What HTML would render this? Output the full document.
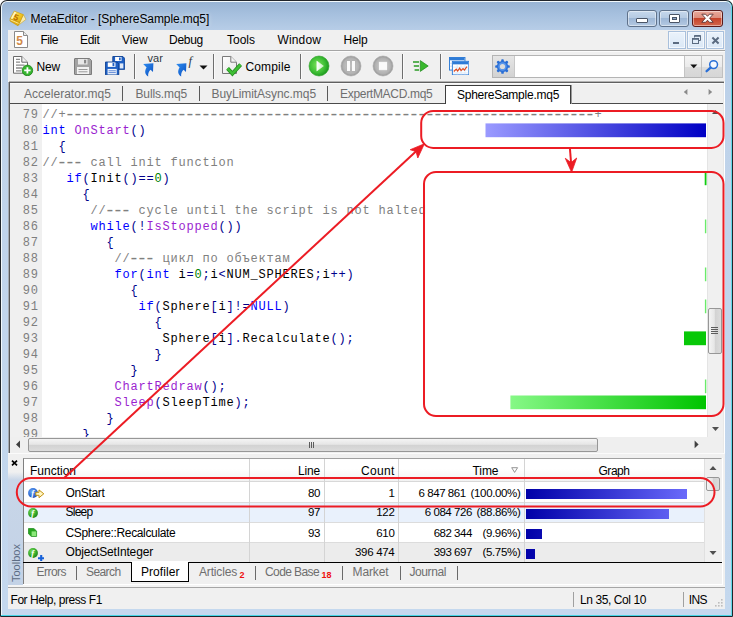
<!DOCTYPE html>
<html><head><meta charset="utf-8"><title>MetaEditor - [SphereSample.mq5]</title>
<style>
*{box-sizing:border-box;margin:0;padding:0}
html,body{width:733px;height:617px;overflow:hidden;background:#fff}
body{position:relative;font-family:"Liberation Sans",sans-serif;font-size:12px;color:#000}
#win{position:absolute;left:0;top:0;width:733px;height:617px;overflow:hidden}
#win div,#win svg,#win pre{position:absolute}
.t{white-space:nowrap}
#frame{left:0;top:0;width:733px;height:617px;border-radius:7px 7px 1px 1px;background:#20252b}
#frame2{left:1px;top:1px;width:731px;height:615px;border-radius:6px 6px 0 0;background:#f2f9fc;border-right:1px solid #62d9e8;border-bottom:1px solid #45d6e6}
#frame3{left:2px;top:2px;width:729px;height:613px;border-radius:5px 5px 0 0;background:linear-gradient(to bottom,#98b4d4 0px,#a6c0de 12px,#b7cde7 28px,#bfd3ea 120px,#c4d8ee 611px)}
#frame4{left:6px;top:30px;width:721px;height:581px;border-right:2px solid rgba(255,255,255,.0)}
pre.code{font-family:"Liberation Mono",monospace;font-size:12px;letter-spacing:.8px;line-height:16px;white-space:pre;color:#000}
.c{color:#808080}.k{color:#0000ff}.f{color:#9b1fd0}.n{color:#008000}.p{color:#00008b}
pre.ln{color:#7e7e7e}

.d{font-size:18px;letter-spacing:-2.8px;line-height:0;position:relative;top:1.5px;margin-left:-2px;margin-right:2px}

</style></head><body>
<div id="win">
<div id="frame"></div><div id="frame2"></div><div id="frame3"></div><div id="frame4"></div>
<svg style="left:8px;top:8px" width="20" height="20" viewBox="8 8 20 20">
<defs><linearGradient id="bk" x1="0" y1="0" x2="1" y2="1"><stop offset="0" stop-color="#fff6c0"/><stop offset=".45" stop-color="#f6cf2c"/><stop offset="1" stop-color="#e2a400"/></linearGradient></defs>
<path d="M23.3 14.6 L25.9 19.4 L17.8 25.7 L19.8 22.2 Z" fill="#f8ecb0" stroke="#c79a10" stroke-width=".5"/>
<path d="M10.1 18.5 L19.9 22.2 L17.8 25.7 L9.9 21 Z" fill="#e3ae10" stroke="#b98a08" stroke-width=".5"/>
<path d="M10.3 19.8 L18.6 23.4" stroke="#fff2b0" stroke-width=".8"/>
<path d="M14.2 11.1 L23.3 14.6 L19.9 22.3 L10.1 18.5 Z" fill="url(#bk)" stroke="#c8980c" stroke-width=".6"/>
<path d="M14.6 11.8 L16.2 12.4 L12.4 19 L10.9 18.4 Z" fill="#fffbe0" opacity=".8"/>
<text x="14" y="20.6" font-family="Liberation Sans, sans-serif" font-weight="bold" font-size="8.5" fill="#b86a00" transform="rotate(22 17 17)">5</text>
</svg>
<div class="t" style="left:30.5px;top:11.4px;font-size:12px;line-height:16px;letter-spacing:-0.09px;color:#000;text-shadow:0 0 4px rgba(255,255,255,.55),0 0 8px rgba(255,255,255,.35);">MetaEditor - [SphereSample.mq5]</div>
<div style="left:627px;top:10px;width:30px;height:17px;border:1px solid #5f728b;border-radius:3px;background:linear-gradient(to bottom,#c6d8ec 0,#b6cbe3 45%,#9db7d6 50%,#b4c9e2 100%);box-shadow:inset 0 0 0 1px rgba(255,255,255,.45)"></div>
<div style="left:659px;top:10px;width:30px;height:17px;border:1px solid #5f728b;border-radius:3px;background:linear-gradient(to bottom,#c6d8ec 0,#b6cbe3 45%,#9db7d6 50%,#b4c9e2 100%);box-shadow:inset 0 0 0 1px rgba(255,255,255,.45)"></div>
<div style="left:692px;top:10px;width:31px;height:17px;border:1px solid #5a1a1a;border-radius:3px;background:linear-gradient(to bottom,#e9a99b 0,#dd8f7f 45%,#c6432a 50%,#d2674d 100%);box-shadow:inset 0 0 0 1px rgba(255,255,255,.45)"></div>
<div style="left:636px;top:18.2px;width:11.5px;height:4.4px;background:#fff;border:1px solid #4a5566;border-radius:1px"></div>
<div style="left:669px;top:14px;width:11px;height:9px;background:#fff;border:1px solid #4a5566;border-radius:1px"></div><div style="left:672px;top:17px;width:5px;height:3px;background:#8fa8c8;border:1px solid #4a5566"></div>
<svg style="left:700px;top:12px" width="16" height="13" viewBox="0 0 16 13"><path d="M1.8 2.2 L5.6 2.2 L7.5 4.3 L9.4 2.2 L13.2 2.2 L9.6 6.2 L13.2 10.3 L9.4 10.3 L7.5 8.2 L5.6 10.3 L1.8 10.3 L5.4 6.2 Z" fill="#fff" stroke="#5c3434" stroke-width=".9" stroke-linejoin="round"/></svg>
<div style="left:8px;top:30px;width:717px;height:20px;background:#f0f0f0"></div>
<div style="left:8px;top:50px;width:717px;height:1px;background:#a5a5a5"></div>
<svg style="left:13px;top:31.4px" width="16" height="17" viewBox="0 0 16 17"><path d="M1.5 .5 H10.5 L14.5 4.5 V16.5 H1.5 Z" fill="#fff" stroke="#8a8a8a"/><path d="M10.5 .5 V4.5 H14.5" fill="#e8e8e8" stroke="#8a8a8a"/><text x="3.2" y="13.5" font-family="Liberation Sans, sans-serif" font-weight="bold" font-size="12" fill="#d08a4a">5</text></svg>
<div class="t" style="left:40.5px;top:31.8px;font-size:12px;line-height:16px;letter-spacing:-0.46px;color:#000;">File</div>
<div class="t" style="left:80.0px;top:31.8px;font-size:12px;line-height:16px;letter-spacing:-0.29px;color:#000;">Edit</div>
<div class="t" style="left:122.0px;top:31.8px;font-size:12px;line-height:16px;letter-spacing:-0.07px;color:#000;">View</div>
<div class="t" style="left:169.0px;top:31.8px;font-size:12px;line-height:16px;letter-spacing:-0.27px;color:#000;">Debug</div>
<div class="t" style="left:227.0px;top:31.8px;font-size:12px;line-height:16px;letter-spacing:-0.00px;color:#000;">Tools</div>
<div class="t" style="left:277.5px;top:31.8px;font-size:12px;line-height:16px;letter-spacing:0.14px;color:#000;">Window</div>
<div class="t" style="left:343.5px;top:31.8px;font-size:12px;line-height:16px;letter-spacing:-0.17px;color:#000;">Help</div>
<div style="left:668.4px;top:31.4px;width:17.2px;height:17.2px;border:1px solid #a9c0dc;background:linear-gradient(to bottom,#eaf2fb,#dbe8f6);box-shadow:inset 0 0 0 1px #f4f8fd"></div>
<div style="left:687.4px;top:31.4px;width:17.2px;height:17.2px;border:1px solid #a9c0dc;background:linear-gradient(to bottom,#eaf2fb,#dbe8f6);box-shadow:inset 0 0 0 1px #f4f8fd"></div>
<div style="left:706.4px;top:31.4px;width:17.2px;height:17.2px;border:1px solid #a9c0dc;background:linear-gradient(to bottom,#eaf2fb,#dbe8f6);box-shadow:inset 0 0 0 1px #f4f8fd"></div>
<div style="left:673.3px;top:41.8px;width:6px;height:2.1px;background:#5b6b80"></div>
<svg style="left:687.6px;top:31.2px" width="17" height="17" viewBox="0 0 17 17"><path d="M6.5 6.5 V4.5 H12.5 V9.5 H10.5" fill="none" stroke="#5b6b80" stroke-width="1"/><path d="M6.5 5 H12.5" stroke="#5b6b80" stroke-width="1.6"/><rect x="4.5" y="7.5" width="6" height="5" fill="none" stroke="#5b6b80"/><path d="M4.5 8 H10.5" stroke="#5b6b80" stroke-width="1.6"/></svg>
<svg style="left:706.8px;top:32px" width="17" height="17" viewBox="0 0 17 17"><path d="M5.4 5.6 L11.6 11.4 M11.6 5.6 L5.4 11.4" stroke="#5b6b80" stroke-width="2"/></svg>
<div style="left:8px;top:51px;width:717px;height:30px;background:#f0f0f0"></div>
<div style="left:8px;top:51px;width:717px;height:1px;background:#fbfbfb"></div>
<div style="left:8px;top:81px;width:717px;height:1px;background:#f8f8f8"></div>
<div style="left:9px;top:81px;width:715px;height:1px;background:#b4b4b4"></div>
<div style="left:9px;top:82px;width:715px;height:1px;background:#606060"></div>
<svg style="left:12px;top:55.2px" width="22" height="21" viewBox="0 0 22 21">
<path d="M1.5 1.5 H9.8 L15.5 7.2 V18.2 H1.5 Z" fill="#fff" stroke="#6a6a6a"/><path d="M9.8 1.5 V7.2 H15.5" fill="#f2f2f2" stroke="#6a6a6a"/>
<path d="M4 4.3 H8 M4 7.2 H8 M4 10.1 H12.5 M4 13 H10 M4 15.9 H9" stroke="#8a8a8a" stroke-width="1.3"/>
<circle cx="15.4" cy="15.4" r="5.3" fill="#35b52e" stroke="#1d7d1a" stroke-width=".8"/><path d="M15.4 12.2 V18.6 M12.2 15.4 H18.6" stroke="#fff" stroke-width="1.8"/></svg>
<div class="t" style="left:36.5px;top:58.8px;font-size:12px;line-height:16px;letter-spacing:-0.17px;color:#000;">New</div>
<svg style="left:74px;top:58px" width="18" height="17" viewBox="0 0 18 17"><path d="M1 .5 H15.5 L17.5 2.5 V16.5 H1 Q.5 16.5 .5 16 V1 Q.5 .5 1 .5 Z" fill="#a3a3a3" stroke="#7c7c7c"/>
<rect x="4" y="1" width="9.5" height="5.5" fill="#e8e8e8"/><rect x="10" y="1.8" width="2.2" height="3.6" fill="#8a8a8a"/><rect x="3" y="9" width="12" height="7" fill="#f2f2f2"/><path d="M4.5 11.5 H13.5 M4.5 13.8 H13.5" stroke="#9a9a9a"/></svg>
<svg style="left:104.7px;top:56px" width="20.2" height="19.4" viewBox="0 0 22 21">
<g><path d="M8.5 .5 H19.5 L21.5 2.5 V14.5 H8.5 Z" fill="#1d5fc4" stroke="#0d3f92"/><rect x="11" y="1" width="7" height="4.4" fill="#fff"/><rect x="15.3" y="1.6" width="1.8" height="3" fill="#1d5fc4"/><rect x="16" y="8" width="4" height="5.5" fill="#dfe9f8"/></g>
<g><path d="M.5 6.5 H13 L15 8.5 V20.5 H.5 Z" fill="#1d5fc4" stroke="#0d3f92"/><rect x="3" y="7" width="8.4" height="4.8" fill="#fff"/><rect x="8.2" y="7.6" width="2" height="3.4" fill="#1d5fc4"/><rect x="2.8" y="14" width="10" height="6" fill="#eef3fb"/><path d="M3.8 16 H11.8 M3.8 18 H11.8" stroke="#4a7ad0" stroke-width=".9"/></g></svg>
<div style="left:134px;top:54px;width:1px;height:25px;background:#6e6e6e"></div>
<div style="left:135px;top:54px;width:1px;height:25px;background:#fafafa"></div>
<svg style="left:143.2px;top:62.5px" width="11" height="14" viewBox="0 0 11 14"><defs><linearGradient id="ba" x1="0" y1="0" x2="1" y2="1"><stop offset="0" stop-color="#2f8df0"/><stop offset="1" stop-color="#0a4fc0"/></linearGradient></defs><path d="M.2 1 L10.4 .3 L10 9 L7.6 6.8 C5.8 8.4 4.8 10.6 5.2 13.6 C2 11.4 1.2 8 3.6 4.4 Z" fill="url(#ba)"/></svg>
<div class="t" style="left:147.5px;top:51.1px;font-size:11px;line-height:15px;letter-spacing:0.07px;color:#303840;">var</div>
<svg style="left:176.4px;top:62.5px" width="11" height="14" viewBox="0 0 11 14"><defs><linearGradient id="ba" x1="0" y1="0" x2="1" y2="1"><stop offset="0" stop-color="#2f8df0"/><stop offset="1" stop-color="#0a4fc0"/></linearGradient></defs><path d="M.2 1 L10.4 .3 L10 9 L7.6 6.8 C5.8 8.4 4.8 10.6 5.2 13.6 C2 11.4 1.2 8 3.6 4.4 Z" fill="url(#ba)"/></svg>
<div class="t" style="left:188.5px;top:53px;font-family:'Liberation Serif',serif;font-style:italic;font-size:12.5px;line-height:16px;color:#303840">f</div>
<svg style="left:199px;top:65px" width="9" height="5" viewBox="0 0 9 5"><path d="M.5 .5 H8.5 L4.5 4.5 Z" fill="#111"/></svg>
<div style="left:213px;top:54px;width:1px;height:25px;background:#6e6e6e"></div>
<div style="left:214px;top:54px;width:1px;height:25px;background:#fafafa"></div>
<svg style="left:221px;top:55px" width="22" height="22" viewBox="0 0 22 22"><defs><linearGradient id="pg" x1="0" y1="0" x2="1" y2="1"><stop offset="0" stop-color="#ffffff"/><stop offset="1" stop-color="#e6e6e6"/></linearGradient></defs>
<path d="M1.5 1.5 H9.8 L15.5 7.2 V18.5 H1.5 Z" fill="url(#pg)" stroke="#7a7a7a"/><path d="M9.8 1.5 V7.2 H15.5" fill="#f4f4f4" stroke="#7a7a7a"/>
<path d="M6.6 13.4 L11.4 18.6 L19.6 9.6" fill="none" stroke="#1f8a1c" stroke-width="3.8"/><path d="M6.6 13.4 L11.4 18.6 L19.6 9.6" fill="none" stroke="#3fbe35" stroke-width="2.4"/></svg>
<div class="t" style="left:245.5px;top:58.8px;font-size:12px;line-height:16px;letter-spacing:0.14px;color:#000;">Compile</div>
<div style="left:300px;top:54px;width:1px;height:25px;background:#6e6e6e"></div>
<div style="left:301px;top:54px;width:1px;height:25px;background:#fafafa"></div>
<svg style="left:308px;top:55px" width="22" height="22" viewBox="0 0 22 22"><defs><radialGradient id="gg" cx=".42" cy=".45" r=".62"><stop offset="0" stop-color="#7be25a"/><stop offset=".6" stop-color="#3fbf35"/><stop offset="1" stop-color="#16921a"/></radialGradient>
<linearGradient id="gw" x1="0" y1="0" x2="1" y2="0"><stop offset="0" stop-color="#ffffff"/><stop offset="1" stop-color="#c9f2c0"/></linearGradient>
<radialGradient id="gr" cx=".5" cy=".5" r=".55"><stop offset="0" stop-color="#cfcfcf"/><stop offset=".7" stop-color="#b2b2b2"/><stop offset="1" stop-color="#8c8c8c"/></radialGradient></defs>
<circle cx="11" cy="11" r="10" fill="url(#gg)" stroke="#2aa024" stroke-width=".6"/><path d="M8.8 6 L15.4 11 L8.8 16 Z" fill="url(#gw)" stroke="#f2fff0" stroke-width=".5" stroke-linejoin="round"/></svg>
<svg style="left:340px;top:55px" width="22" height="22" viewBox="0 0 22 22">
<circle cx="11" cy="11" r="10" fill="url(#gr)" stroke="#a8a8a8" stroke-width=".6"/><rect x="6.8" y="5.8" width="3.4" height="10.4" fill="#fafafa" stroke="#9c9c9c" stroke-width=".4"/><rect x="11.8" y="5.8" width="3.4" height="10.4" fill="#fafafa" stroke="#9c9c9c" stroke-width=".4"/></svg>
<svg style="left:372px;top:55px" width="22" height="22" viewBox="0 0 22 22">
<circle cx="11" cy="11" r="10" fill="url(#gr)" stroke="#a8a8a8" stroke-width=".6"/><rect x="6.5" y="6.6" width="9" height="8.8" rx=".8" fill="#fafafa" stroke="#9c9c9c" stroke-width=".4"/></svg>
<div style="left:402px;top:54px;width:1px;height:25px;background:#6e6e6e"></div>
<div style="left:403px;top:54px;width:1px;height:25px;background:#fafafa"></div>
<svg style="left:412px;top:59.5px" width="17" height="12" viewBox="0 0 17 12"><path d="M1 2 H7 M1.8 6 H7 M2.6 10 H7" stroke="#2a9a24" stroke-width="1.5"/><path d="M8.3 .6 L16.2 6 L8.3 11.4 Z" fill="#39b82e" stroke="#1c8a18" stroke-width=".7"/></svg>
<div style="left:440px;top:54px;width:1px;height:25px;background:#6e6e6e"></div>
<div style="left:441px;top:54px;width:1px;height:25px;background:#fafafa"></div>
<svg style="left:448.6px;top:56.6px" width="20.3" height="18.4" viewBox="0 0 21 19">
<rect x=".5" y=".5" width="16" height="13" fill="#fff" stroke="#2e7bd6"/><rect x="1" y="1" width="15" height="2.4" fill="#2e7bd6"/><path d="M1 6.5 H4 M1 9.5 H4" stroke="#cfe0f6"/>
<rect x="3.5" y="4.5" width="17" height="14" fill="#fff" stroke="#2e7bd6"/><rect x="4" y="5" width="16" height="2.6" fill="#2e7bd6"/>
<path d="M4 10.5 H20 M4 13.5 H20 M4 16.5 H20 M8.5 8 V18 M12.5 8 V18 M16.5 8 V18" stroke="#d6e6f8" stroke-width=".8"/>
<path d="M5 15 L7.5 12.5 L9 14.5 L11 11.5 L12.5 14 L14.5 12 L16 13.5 L18.5 10" fill="none" stroke="#e0481a" stroke-width="1.2"/></svg>
<div style="left:492px;top:55px;width:209px;height:23px;border:1px solid #b4b4b4;background:#fff"></div>
<div style="left:493px;top:56px;width:22px;height:21px;background:linear-gradient(to bottom,#e6e6e6,#d2d2d2);border-right:1px solid #c8c8c8"></div>
<svg style="left:494px;top:57.5px" width="17" height="17" viewBox="0 0 17 17"><g fill="#2a6fd6"><rect x="7.2" y="1.2" width="2.6" height="4" rx=".9" transform="rotate(0 8.5 8.5)"/><rect x="7.2" y="1.2" width="2.6" height="4" rx=".9" transform="rotate(45 8.5 8.5)"/><rect x="7.2" y="1.2" width="2.6" height="4" rx=".9" transform="rotate(90 8.5 8.5)"/><rect x="7.2" y="1.2" width="2.6" height="4" rx=".9" transform="rotate(135 8.5 8.5)"/><rect x="7.2" y="1.2" width="2.6" height="4" rx=".9" transform="rotate(180 8.5 8.5)"/><rect x="7.2" y="1.2" width="2.6" height="4" rx=".9" transform="rotate(225 8.5 8.5)"/><rect x="7.2" y="1.2" width="2.6" height="4" rx=".9" transform="rotate(270 8.5 8.5)"/><rect x="7.2" y="1.2" width="2.6" height="4" rx=".9" transform="rotate(315 8.5 8.5)"/><circle cx="8.5" cy="8.5" r="5.6"/></g><circle cx="8.5" cy="8.5" r="4.2" fill="#5a96ea"/><circle cx="8.5" cy="8.5" r="2.6" fill="#dcdcdc"/></svg>
<div style="left:684px;top:56px;width:17px;height:21px;border-left:1px solid #c4c4c4;background:linear-gradient(to bottom,#f4f4f4 0,#ebebeb 50%,#dcdcdc 52%,#d6d6d6 100%)"></div>
<svg style="left:689.5px;top:64px" width="8" height="5" viewBox="0 0 8 5"><path d="M.3 .4 H7.3 L3.8 4.2 Z" fill="#111"/></svg>
<div style="left:701px;top:55px;width:22px;height:23px;border:1px solid #c0c0c0;background:linear-gradient(to bottom,#f4f4f4 0,#ebebeb 50%,#dcdcdc 52%,#d6d6d6 100%)"></div>
<svg style="left:703px;top:57px" width="19" height="19" viewBox="0 0 19 19"><circle cx="10.6" cy="7.6" r="3.9" fill="#f4f8ff" stroke="#2a6fd6" stroke-width="1.5"/><path d="M7.6 10.6 L3.6 14.2" stroke="#2a6fd6" stroke-width="2.3" stroke-linecap="round"/></svg>
<div style="left:8px;top:83px;width:717px;height:21px;background:#f0f0f0"></div>
<div style="left:10px;top:83px;width:713px;height:1px;background:#fafafa"></div>
<div style="left:8px;top:82px;width:1px;height:371px;background:#a4aab2"></div>
<div style="left:9px;top:82px;width:1px;height:371px;background:#5a5a5a"></div>
<div style="left:10px;top:103px;width:714px;height:1px;background:#4a4a4a"></div>
<div style="left:723px;top:83px;width:1px;height:370px;background:#e8e8e8"></div>
<div style="left:724px;top:82px;width:1px;height:371px;background:#fff"></div>
<div class="t" style="left:24.0px;top:86.3px;font-size:12px;line-height:16px;letter-spacing:0.02px;color:#6e6e6e;">Accelerator.mq5</div>
<div class="t" style="left:135.5px;top:86.3px;font-size:12px;line-height:16px;letter-spacing:-0.13px;color:#6e6e6e;">Bulls.mq5</div>
<div class="t" style="left:211.5px;top:86.3px;font-size:12px;line-height:16px;letter-spacing:-0.05px;color:#6e6e6e;">BuyLimitAsync.mq5</div>
<div class="t" style="left:340.0px;top:86.3px;font-size:12px;line-height:16px;letter-spacing:-0.30px;color:#6e6e6e;">ExpertMACD.mq5</div>
<div style="left:122px;top:86px;width:1px;height:15px;background:#5a5a5a"></div>
<div style="left:199px;top:86px;width:1px;height:15px;background:#5a5a5a"></div>
<div style="left:327px;top:86px;width:1px;height:15px;background:#5a5a5a"></div>
<div style="left:445px;top:85px;width:126px;height:19px;background:#fff;border:1px solid #3c3c3c;border-bottom:none;box-shadow:1px 0 0 #9a9a9a"></div>
<div class="t" style="left:457.0px;top:87.3px;font-size:12px;line-height:16px;letter-spacing:-0.25px;color:#000;">SphereSample.mq5</div>
<svg style="left:680px;top:87px" width="36" height="10" viewBox="0 0 36 10"><path d="M7.4 2 L3.8 5 L7.4 8 Z M28.6 2 L32.2 5 L28.6 8 Z" fill="#8a8a8a"/></svg>
<div style="left:10px;top:104px;width:697px;height:333px;background:#fff"></div>
<div style="left:10px;top:104px;width:32px;height:333px;background:#f0f0f0"></div>
<div style="left:10px;top:104px;width:697px;height:333px;overflow:hidden">
<pre class="code ln" style="left:12.8px;top:3px;width:16px;text-align:right">79
80
81
82
83
84
85
86
87
88
89
90
91
92
93
94
95
96
97
98
99</pre>
<pre class="code" style="left:32.4px;top:3px"><span class="c">//+<span class="d">------------------------------------------------------------------</span>+</span>
<span class="k">int</span> <span class="f">OnStart</span><span class="p">()</span>
  <span class="p">{</span>
<span class="c">//<span class="d">---</span> call init function</span>
   <span class="k">if</span><span class="p">(</span>Init<span class="p">()==</span><span class="n">0</span><span class="p">)</span>
     <span class="p">{</span>
      <span class="c">//<span class="d">---</span> cycle until the script is not halted</span>
      <span class="k">while</span><span class="p">(!</span><span class="f">IsStopped</span><span class="p">())</span>
        <span class="p">{</span>
         <span class="c">//<span class="d">---</span> цикл по объектам</span>
         <span class="k">for</span><span class="p">(</span><span class="k">int</span> i<span class="p">=</span><span class="n">0</span><span class="p">;</span>i<span class="p">&lt;</span>NUM_SPHERES<span class="p">;</span>i<span class="p">++)</span>
           <span class="p">{</span>
            <span class="k">if</span><span class="p">(</span>Sphere<span class="p">[</span>i<span class="p">]!=</span><span class="k">NULL</span><span class="p">)</span>
              <span class="p">{</span>
               Sphere<span class="p">[</span>i<span class="p">].</span>Recalculate<span class="p">();</span>
              <span class="p">}</span>
           <span class="p">}</span>
         <span class="f">ChartRedraw</span><span class="p">();</span>
         <span class="f">Sleep</span><span class="p">(</span>SleepTime<span class="p">);</span>
        <span class="p">}</span>
     <span class="p">}</span></pre>
</div>
<div style="left:707px;top:104px;width:16px;height:333px;background:#f0f0f0;border-left:1px solid #e4e4e4"></div>
<svg style="left:707px;top:104px" width="16" height="333" viewBox="0 0 16 333"><path d="M5 10 L8.5 6 L12 10 Z" fill="#505050"/><path d="M5 323 L8.5 327 L12 323 Z" fill="#505050"/></svg>
<div style="left:708px;top:308px;width:14px;height:46px;border:1px solid #979797;border-radius:2px;background:linear-gradient(to right,#f4f4f4 0,#e6e6e6 45%,#d2d2d2 50%,#dcdcdc 100%)"></div>
<div style="left:711px;top:327px;width:7px;height:1px;background:#5c5c5c"></div>
<div style="left:711px;top:329px;width:7px;height:1px;background:#5c5c5c"></div>
<div style="left:711px;top:331px;width:7px;height:1px;background:#5c5c5c"></div>
<div style="left:711px;top:333px;width:7px;height:1px;background:#5c5c5c"></div>
<div style="left:10px;top:437px;width:713px;height:16px;background:#efefef"></div>
<svg style="left:10px;top:437px" width="713" height="16" viewBox="0 0 713 16"><path d="M10 3.6 L6 7.4 L10 11.2 Z" fill="#404040"/><path d="M684.6 3.6 L688.6 7.4 L684.6 11.2 Z" fill="#404040"/></svg>
<div style="left:28px;top:438px;width:570px;height:14px;border:1px solid #979797;border-radius:2px;background:linear-gradient(to bottom,#f4f4f4 0,#e6e6e6 45%,#d2d2d2 50%,#dcdcdc 100%)"></div>
<div style="left:309px;top:442px;width:1px;height:6px;background:#5c5c5c"></div>
<div style="left:311px;top:442px;width:1px;height:6px;background:#5c5c5c"></div>
<div style="left:313px;top:442px;width:1px;height:6px;background:#5c5c5c"></div>
<div style="left:8px;top:453px;width:717px;height:5px;background:#f0f0f0"></div>
<div style="left:8px;top:453px;width:717px;height:1px;background:#fbfbfb"></div>
<div style="left:8px;top:458px;width:717px;height:128px;background:#f0f0f0"></div>
<div style="left:8px;top:472px;width:15px;height:114px;background:linear-gradient(to bottom,#f0f0f0 0,#c8d6e8 8px,#c3d2e6 100%)"></div>
<svg style="left:11.3px;top:460px" width="7" height="6" viewBox="0 0 7 6"><path d="M1 .6 L6 5.4 M6 .6 L1 5.4" stroke="#000" stroke-width="1.7"/></svg>
<div class="t" style="left:9.4px;top:582.2px;width:40px;height:14px;line-height:14px;font-size:11px;letter-spacing:0;color:#5c6c84;transform-origin:0 0;transform:rotate(-90deg)">Toolbox</div>
<div style="left:23px;top:458px;width:699px;height:105px;background:#fff;border:1px solid #a0a0a0;border-left-color:#808080;border-bottom:none;border-right-color:#f0f0f0"></div>
<div style="left:24px;top:459px;width:680px;height:22px;background:linear-gradient(to bottom,#fff 0,#fff 45%,#f2f2f2 100%)"></div>
<div style="left:24px;top:481px;width:680px;height:1px;background:#d8d8d8"></div>
<div style="left:24px;top:482px;width:680px;height:20px;background:#fff"></div>
<div style="left:24px;top:502px;width:680px;height:1px;background:#dcdcdc"></div>
<div style="left:24px;top:503px;width:680px;height:19px;background:#e9f1fc"></div>
<div style="left:24px;top:522px;width:680px;height:1px;background:#dcdcdc"></div>
<div style="left:24px;top:523px;width:680px;height:20px;background:#fff"></div>
<div style="left:24px;top:542px;width:680px;height:1px;background:#dcdcdc"></div>
<div style="left:24px;top:543px;width:680px;height:20px;background:#ececec"></div>
<div style="left:24px;top:562px;width:680px;height:1px;background:#dcdcdc"></div>
<div style="left:249px;top:459px;width:1px;height:103px;background:#d4d4d4"></div>
<div style="left:324px;top:459px;width:1px;height:103px;background:#d4d4d4"></div>
<div style="left:398px;top:459px;width:1px;height:103px;background:#d4d4d4"></div>
<div style="left:524px;top:459px;width:1px;height:103px;background:#d4d4d4"></div>
<div style="left:23px;top:562px;width:699px;height:1px;background:#000"></div>
<div class="t" style="left:30.0px;top:462.6px;font-size:12px;line-height:16px;letter-spacing:-0.00px;color:#000;">Function</div>
<div class="t" style="left:298.0px;top:462.6px;font-size:12px;line-height:16px;letter-spacing:-0.17px;color:#000;">Line</div>
<div class="t" style="left:361.0px;top:462.6px;font-size:12px;line-height:16px;letter-spacing:0.30px;color:#000;">Count</div>
<div class="t" style="left:472.5px;top:462.6px;font-size:12px;line-height:16px;letter-spacing:-0.06px;color:#000;">Time</div>
<svg style="left:511px;top:467px" width="8" height="7" viewBox="0 0 8 7"><path d="M.7 .7 H6.6 L3.6 5.4 Z" fill="none" stroke="#8a8a8a" stroke-width=".9"/></svg>
<div class="t" style="left:598.5px;top:462.6px;font-size:12px;line-height:16px;letter-spacing:-0.47px;color:#000;">Graph</div>
<div class="t" style="left:65.5px;top:484.7px;font-size:12px;line-height:16px;letter-spacing:-0.33px;color:#000;">OnStart</div>
<div class="t" style="left:307.9px;top:485.0px;font-size:11.5px;line-height:16px;letter-spacing:-0.32px;color:#000;">80</div>
<div class="t" style="left:388.4px;top:485.0px;font-size:11.5px;line-height:16px;letter-spacing:-0.32px;color:#000;">1</div>
<div class="t" style="left:418.6px;top:485.0px;font-size:11.5px;line-height:16px;letter-spacing:-0.46px;color:#000;">6 847 861</div>
<div class="t" style="left:470.6px;top:485.0px;font-size:11.5px;line-height:16px;letter-spacing:-0.36px;color:#000;">(100.00%)</div>
<div style="left:526px;top:489px;width:161px;height:10px;background:linear-gradient(to right,#0000a8 0,#6a6afa 161px)"></div>
<div class="t" style="left:65.5px;top:504.4px;font-size:12px;line-height:16px;letter-spacing:-0.74px;color:#000;">Sleep</div>
<div class="t" style="left:307.9px;top:504.0px;font-size:11.5px;line-height:16px;letter-spacing:-0.32px;color:#000;">97</div>
<div class="t" style="left:376.3px;top:504.0px;font-size:11.5px;line-height:16px;letter-spacing:-0.32px;color:#000;">122</div>
<div class="t" style="left:424.8px;top:504.0px;font-size:11.5px;line-height:16px;letter-spacing:-0.46px;color:#000;">6 084 726</div>
<div class="t" style="left:476.6px;top:504.0px;font-size:11.5px;line-height:16px;letter-spacing:-0.35px;color:#000;">(88.86%)</div>
<div style="left:526px;top:509px;width:143px;height:10px;background:linear-gradient(to right,#0000a8 0,#6a6afa 161px)"></div>
<div class="t" style="left:65.5px;top:525.4px;font-size:12px;line-height:16px;letter-spacing:-0.34px;color:#000;">CSphere::Recalculate</div>
<div class="t" style="left:307.9px;top:525.0px;font-size:11.5px;line-height:16px;letter-spacing:-0.32px;color:#000;">93</div>
<div class="t" style="left:376.3px;top:525.0px;font-size:11.5px;line-height:16px;letter-spacing:-0.32px;color:#000;">610</div>
<div class="t" style="left:433.7px;top:525.0px;font-size:11.5px;line-height:16px;letter-spacing:-0.49px;color:#000;">682 344</div>
<div class="t" style="left:482.4px;top:525.0px;font-size:11.5px;line-height:16px;letter-spacing:-0.32px;color:#000;">(9.96%)</div>
<div style="left:526px;top:529px;width:15.5px;height:10px;background:linear-gradient(to right,#0000a8 0,#6a6afa 161px)"></div>
<div class="t" style="left:65.5px;top:544.3px;font-size:12px;line-height:16px;letter-spacing:-0.16px;color:#000;">ObjectSetInteger</div>
<div class="t" style="left:355.0px;top:544.0px;font-size:11.5px;line-height:16px;letter-spacing:-0.30px;color:#000;">396 474</div>
<div class="t" style="left:433.7px;top:544.0px;font-size:11.5px;line-height:16px;letter-spacing:-0.49px;color:#000;">393 697</div>
<div class="t" style="left:482.4px;top:544.0px;font-size:11.5px;line-height:16px;letter-spacing:-0.32px;color:#000;">(5.75%)</div>
<div style="left:526px;top:549px;width:9px;height:10px;background:linear-gradient(to right,#0000a8 0,#6a6afa 161px)"></div>
<svg style="left:27px;top:486.8px" width="12" height="12" viewBox="0 0 12 12"><defs><radialGradient id="g492" cx=".4" cy=".35" r=".7"><stop offset="0" stop-color="#6aa6f4"/><stop offset=".6" stop-color="#3472d8"/><stop offset="1" stop-color="#1c4cae"/></radialGradient></defs><circle cx="6" cy="6" r="4.9" fill="url(#g492)"/><text x="4.2" y="8.8" font-family="Liberation Serif, serif" font-style="italic" font-weight="bold" font-size="8.5" fill="#fff">f</text></svg>
<svg style="left:35px;top:488.5px" width="10" height="10" viewBox="0 0 10 10"><path d="M.8 3.3 H4 V.9 L8.8 4.8 L4 8.7 V6.3 H.8 Z" fill="#fff6c4" stroke="#c2900e" stroke-width="1" stroke-linejoin="round"/></svg>
<svg style="left:27px;top:507px" width="12" height="12" viewBox="0 0 12 12"><defs><radialGradient id="g513" cx=".4" cy=".35" r=".7"><stop offset="0" stop-color="#7fdc5c"/><stop offset=".6" stop-color="#36ac2a"/><stop offset="1" stop-color="#1c7c18"/></radialGradient></defs><circle cx="6" cy="6" r="4.9" fill="url(#g513)"/><text x="4.2" y="8.8" font-family="Liberation Serif, serif" font-style="italic" font-weight="bold" font-size="8.5" fill="#fff">f</text></svg>
<svg style="left:28px;top:528.2px" width="10" height="9" viewBox="0 0 10 9"><path d="M.5 .5 H5.8 L8.6 3 V8.4 H3.2 L.5 5.8 Z" fill="#27a41f" stroke="#1a8a1a" stroke-width=".7"/><rect x="3.6" y="3.4" width="4.6" height="4.6" fill="#8be87a"/></svg>
<svg style="left:27px;top:547px" width="12" height="12" viewBox="0 0 12 12"><defs><radialGradient id="g553" cx=".4" cy=".35" r=".7"><stop offset="0" stop-color="#7fdc5c"/><stop offset=".6" stop-color="#36ac2a"/><stop offset="1" stop-color="#1c7c18"/></radialGradient></defs><circle cx="6" cy="6" r="4.9" fill="url(#g553)"/><text x="4.2" y="8.8" font-family="Liberation Serif, serif" font-style="italic" font-weight="bold" font-size="8.5" fill="#fff">f</text></svg>
<svg style="left:38px;top:554.6px" width="6.4" height="6.4" viewBox="0 0 7 7"><path d="M3.5 0 V7 M0 3.5 H7" stroke="#1560d8" stroke-width="2.3"/></svg>
<div style="left:704px;top:459px;width:17px;height:103px;background:#f0f0f0;border-left:1px solid #e0e0e0"></div>
<svg style="left:704px;top:459px" width="17" height="103" viewBox="0 0 17 103"><path d="M5.5 11 L9 7 L12.5 11 Z" fill="#505050"/><path d="M5.5 92 L9 96 L12.5 92 Z" fill="#505050"/></svg>
<div style="left:706px;top:477px;width:14px;height:14px;border:1px solid #979797;border-radius:2px;background:linear-gradient(to right,#f4f4f4 0,#e6e6e6 45%,#d2d2d2 50%,#dcdcdc 100%)"></div>
<div style="left:23px;top:563px;width:1px;height:21px;background:#808080"></div>
<div class="t" style="left:36.5px;top:564.1px;font-size:12px;line-height:16px;letter-spacing:-0.53px;color:#6e6e6e;">Errors</div>
<div class="t" style="left:86.0px;top:564.1px;font-size:12px;line-height:16px;letter-spacing:-0.59px;color:#6e6e6e;">Search</div>
<div style="left:131px;top:562px;width:58px;height:20px;background:#fff;border:1px solid #000;border-top:none;box-shadow:0 -1px 0 #fff"></div>
<div class="t" style="left:141.0px;top:564.1px;font-size:12px;line-height:16px;letter-spacing:0.06px;color:#000;">Profiler</div>
<div class="t" style="left:199.0px;top:564.1px;font-size:12px;line-height:16px;letter-spacing:-0.17px;color:#6e6e6e;">Articles</div>
<div class="t" style="left:239.6px;top:569px;font-size:9px;font-weight:bold;line-height:12px;color:#ee1111">2</div>
<div class="t" style="left:265.0px;top:564.1px;font-size:12px;line-height:16px;letter-spacing:-0.60px;color:#6e6e6e;">Code Base</div>
<div class="t" style="left:321.6px;top:569px;font-size:9px;font-weight:bold;line-height:12px;color:#ee1111;letter-spacing:0">18</div>
<div class="t" style="left:352.5px;top:564.1px;font-size:12px;line-height:16px;letter-spacing:-0.11px;color:#6e6e6e;">Market</div>
<div class="t" style="left:409.5px;top:564.1px;font-size:12px;line-height:16px;letter-spacing:-0.41px;color:#6e6e6e;">Journal</div>
<div style="left:76px;top:566px;width:1px;height:14px;background:#6a6a6a"></div>
<div style="left:255px;top:566px;width:1px;height:14px;background:#6a6a6a"></div>
<div style="left:342px;top:566px;width:1px;height:14px;background:#6a6a6a"></div>
<div style="left:400px;top:566px;width:1px;height:14px;background:#6a6a6a"></div>
<div style="left:457px;top:566px;width:1px;height:14px;background:#6a6a6a"></div>
<div style="left:8px;top:585px;width:717px;height:2px;background:#f4f4f4"></div>
<div style="left:8px;top:587px;width:717px;height:1px;background:#a6a6a6"></div>
<div style="left:8px;top:588px;width:717px;height:21px;background:#f0f0f0"></div>
<div class="t" style="left:10.5px;top:592.0px;font-size:12px;line-height:16px;letter-spacing:-0.44px;color:#000;">For Help, press F1</div>
<div style="left:573px;top:592px;width:1px;height:15px;background:#a0a0a0"></div>
<div style="left:683px;top:592px;width:1px;height:15px;background:#a0a0a0"></div>
<div class="t" style="left:580.0px;top:592.0px;font-size:12px;line-height:16px;letter-spacing:-0.41px;color:#000;">Ln 35, Col 10</div>
<div class="t" style="left:688.8px;top:592.0px;font-size:12px;line-height:16px;letter-spacing:-0.60px;color:#000;">INS</div>
<svg style="left:713px;top:597px" width="11" height="11" viewBox="0 0 11 11"><g fill="#bdbdbd"><rect x="8" y="8" width="1.6" height="1.6"/><rect x="8" y="5" width="1.6" height="1.6"/><rect x="8" y="2" width="1.6" height="1.6"/><rect x="5" y="8" width="1.6" height="1.6"/><rect x="5" y="5" width="1.6" height="1.6"/><rect x="2" y="8" width="1.6" height="1.6"/></g></svg>
<div style="left:722px;top:458px;width:1px;height:127px;background:#fff"></div>
<div style="left:23px;top:584px;width:700px;height:1px;background:#fff"></div>
<svg style="left:0;top:0" width="733" height="617" viewBox="0 0 733 617" fill="none" stroke="#ec1c24" stroke-width="2">
<defs><linearGradient id="gb" x1="0" y1="0" x2="1" y2="0"><stop offset="0" stop-color="#9a9aff"/><stop offset="1" stop-color="#0000c4"/></linearGradient>
<linearGradient id="gn" x1="0" y1="0" x2="1" y2="0"><stop offset="0" stop-color="#86f886"/><stop offset="1" stop-color="#00c400"/></linearGradient></defs>
<rect x="485.5" y="123.4" width="220.5" height="13.8" fill="url(#gb)" stroke="none"/>
<rect x="510.4" y="395.5" width="195.6" height="13.7" fill="url(#gn)" stroke="none"/>
<rect x="684" y="331.4" width="22" height="13.8" fill="#08c808" stroke="none"/>
<path d="M705.6 172.8 V185.2" stroke="#10cc10" stroke-width="1.8"/>
<path d="M705.6 219.4 V233.2 M705.6 267.4 V281.2 M705.6 299.4 V313.2 M705.6 379.4 V393.2" stroke="#6aea6a" stroke-width="1.4"/>
<rect x="421.2" y="111" width="302.3" height="36.9" rx="12" ry="12"/>
<rect x="424" y="172" width="299.5" height="244" rx="12" ry="12"/>
<rect x="16.8" y="477.9" width="697.7" height="28.6" rx="14.3" ry="14.3"/>
<path d="M569.9 148 L571.3 166"/>
<path d="M571.6 172.3 L565.3 158.3 L571 162.6 L576.7 158 Z" fill="#ec1c24" stroke-width=".8" stroke-linejoin="round"/>
<path d="M63.6 478.4 L418 149.5"/>
<path d="M424.4 143.8 L410.2 149.7 L416 151.6 L417.8 158 Z" fill="#ec1c24" stroke-width=".8" stroke-linejoin="round"/>
</svg>
</div>
</body></html>
